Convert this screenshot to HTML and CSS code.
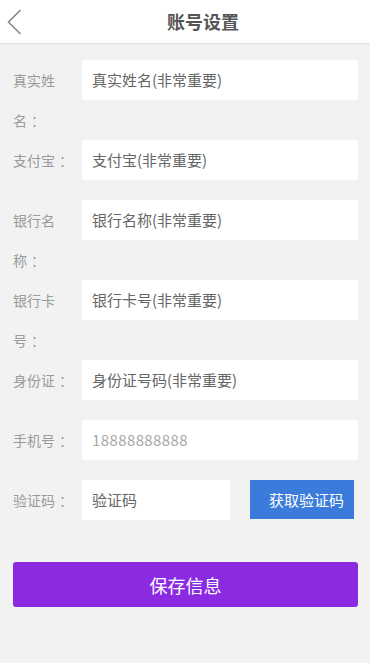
FILE: index.html
```html
<!DOCTYPE html>
<html lang="zh">
<head>
<meta charset="utf-8">
<title>账号设置</title>
<link rel="stylesheet" href="styles.css">
</head>
<body>
<header class="topbar">
  <a class="back" href="#"><svg width="16" height="26" viewBox="0 0 16 26"><path d="M13.5 1 L1.5 13 L13.5 25" fill="none" stroke="#888" stroke-width="1.6"/></svg></a>
  <h1 class="title">账号设置</h1>
</header>
<main class="form">
  <div class="row"><label class="label">真实姓名<span class="colon">：</span></label><div class="field">真实姓名(非常重要)</div></div>
  <div class="row"><label class="label">支付宝<span class="colon">：</span></label><div class="field">支付宝(非常重要)</div></div>
  <div class="row"><label class="label">银行名称<span class="colon">：</span></label><div class="field">银行名称(非常重要)</div></div>
  <div class="row"><label class="label">银行卡号<span class="colon">：</span></label><div class="field">银行卡号(非常重要)</div></div>
  <div class="row"><label class="label">身份证<span class="colon">：</span></label><div class="field">身份证号码(非常重要)</div></div>
  <div class="row"><label class="label">手机号<span class="colon">：</span></label><div class="field placeholder">18888888888</div></div>
  <div class="row"><label class="label">验证码<span class="colon">：</span></label><div class="field code">验证码</div><button class="get-code">获取验证码</button></div>
  <button class="save">保存信息</button>
</main>
</body>
</html>
```

FILE: styles.css
```css
* { box-sizing: border-box; }
html, body { margin: 0; padding: 0; }
body {
  background: #f2f2f2;
  font-family: "Noto Sans CJK SC", "Liberation Sans", sans-serif;
  height: 663px;
}
.topbar {
  display: flex;
  align-items: center;
  height: 44px;
  background: #fff;
  border-bottom: 1px solid #e2e2e2;
}
.back {
  width: 36px;
  height: 43px;
  display: flex;
  align-items: center;
  padding-left: 7px;
}
.back svg { display: block; }
.title {
  flex: 1;
  margin: 0;
  text-align: center;
  font-size: 18px;
  font-weight: bold;
  color: #555;
  line-height: 43px;
}
.form {
  padding: 16px 12px 0 13px;
}
.row {
  display: flex;
  align-items: flex-start;
}
.label {
  flex: 0 0 64px;
  width: 64px;
  margin-right: 5px;
  font-size: 14px;
  line-height: 40px;
  color: #9a9a9a;
}
.colon {
  padding-left: 4px;
}
.field {
  flex: 1;
  height: 40px;
  margin-bottom: 20px;
  background: #fff;
  padding-left: 10px;
  font-size: 15px;
  line-height: 40px;
  color: #666;
}
.field.placeholder {
  color: #a8a8a8;
  letter-spacing: 0.4px;
}
.field.code {
  flex: 0 0 148px;
}
.get-code {
  flex: 0 0 104px;
  margin-left: 20px;
  height: 39px;
  border: 0;
  background: #3a7bdb;
  color: #fff;
  font-family: inherit;
  font-size: 15px;
  padding: 0 0 0 19px;
  text-align: left;
  margin-right: 4px;
}
.save {
  display: block;
  width: 345px;
  height: 45px;
  margin-top: 22px;
  border: 0;
  border-radius: 3px;
  background: #8a2be2;
  color: #fff;
  font-family: inherit;
  font-size: 18px;
}
```
